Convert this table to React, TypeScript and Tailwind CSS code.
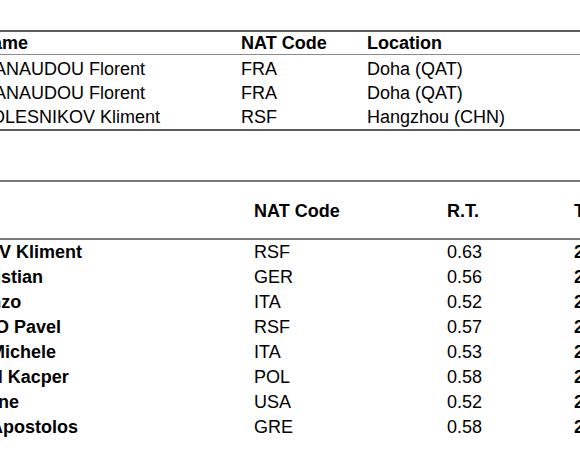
const venues = [
  { name: "MANAUDOU Florent", nat: "FRA", location: "Doha (QAT)" },
  { name: "MANAUDOU Florent", nat: "FRA", location: "Doha (QAT)" },
  { name: "KOLESNIKOV Kliment", nat: "RSF", location: "Hangzhou (CHN)" },
];

const results = [
  { name: "KOLESNIKOV Kliment", nat: "RSF", rt: "0.63", time: "23.55" },
  { name: "DIENER Christian", nat: "GER", rt: "0.56", time: "23.98" },
  { name: "MORA Lorenzo", nat: "ITA", rt: "0.52", time: "24.02" },
  { name: "SAMUSENKO Pavel", nat: "RSF", rt: "0.57", time: "24.10" },
  { name: "LAMBERTI Michele", nat: "ITA", rt: "0.53", time: "24.16" },
  { name: "STOKOWSKI Kacper", nat: "POL", rt: "0.58", time: "24.21" },
  { name: "CASAS Shaine", nat: "USA", rt: "0.52", time: "24.27" },
  { name: "CHRISTOU Apostolos", nat: "GRE", rt: "0.58", time: "24.33" },
];

export default function App() {
  return (
    <div className="w-[580px] h-[460px] overflow-hidden bg-white text-black text-[18px] font-['Liberation_Sans',Arial,Helvetica,sans-serif]">
      {/* Records table */}
      <div className="pt-[30px]">
        <div className="border-t-2 border-[#5c5c5c]">
          <div className="-ml-[21px] grid grid-cols-[262px_126px_1fr] h-[22px] items-center leading-[22px] font-bold whitespace-nowrap">
            <div>Name</div>
            <div>NAT Code</div>
            <div>Location</div>
          </div>
        </div>
        <div className="border-t border-[#8c8c8c] pt-[2px]">
          {venues.map((v, i) => (
            <div
              key={i}
              className="-ml-[21px] grid grid-cols-[262px_126px_1fr] h-6 items-center leading-6 whitespace-nowrap"
            >
              <div>{v.name}</div>
              <div>{v.nat}</div>
              <div>{v.location}</div>
            </div>
          ))}
        </div>
        <div className="border-t-2 border-[#5c5c5c]" />
      </div>

      {/* Results table */}
      <div className="mt-[49px] border-t-2 border-[#7a7a7a]">
        <div className="-ml-[108px] grid grid-cols-[362px_193px_127px_1fr] h-[56px] pt-[2px] items-center font-bold whitespace-nowrap">
          <div>Name</div>
          <div>NAT Code</div>
          <div>R.T.</div>
          <div>Time</div>
        </div>
        <div className="border-t-2 border-[#7a7a7a]">
          {results.map((r, i) => (
            <div
              key={i}
              className="-ml-[108px] grid grid-cols-[362px_193px_127px_1fr] h-[25px] items-center leading-[25px] whitespace-nowrap"
            >
              <div className="font-bold">{r.name}</div>
              <div>{r.nat}</div>
              <div>{r.rt}</div>
              <div className="font-bold">{r.time}</div>
            </div>
          ))}
        </div>
      </div>
    </div>
  );
}
